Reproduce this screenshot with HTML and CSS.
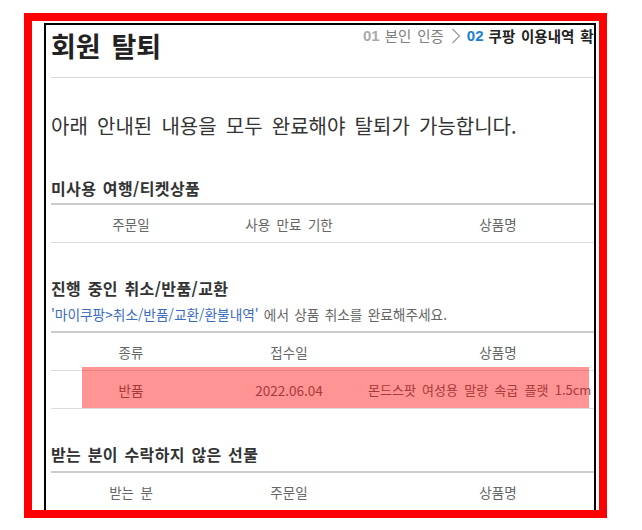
FILE: index.html
```html
<!DOCTYPE html>
<html lang="ko">
<head>
<meta charset="utf-8">
<title>회원 탈퇴</title>
<link rel="stylesheet" href="styles.css">
</head>
<body>
<div class="frame">
  <div class="panel">
    <div class="inner">
      <div class="top">
        <h1 class="title">회원 탈퇴</h1>
        <div class="steps">
          <span class="num off">01</span> <span class="step off">본인 인증</span>
          <svg class="chev" width="10" height="16" viewBox="0 0 10 16"><polyline points="1.5,1 8.5,8 1.5,15" fill="none" stroke="#9a9a9a" stroke-width="1.2"/></svg>
          <span class="num on">02</span> <span class="step on">쿠팡 이용내역 확</span>
        </div>
      </div>

      <p class="lead">아래 안내된 내용을 모두 완료해야 탈퇴가 가능합니다.</p>

      <section class="sec first">
        <h2 class="sec-title">미사용 여행/티켓상품</h2>
        <div class="row head">
          <span class="c1">주문일</span><span class="c2">사용 만료 기한</span><span class="c3">상품명</span>
        </div>
      </section>

      <section class="sec">
        <div class="sec-head">
          <h2 class="sec-title plain">진행 중인 취소/반품/교환</h2>
          <p class="note"><span class="link">'마이쿠팡&gt;취소/반품/교환/환불내역'</span> 에서 상품 취소를 완료해주세요.</p>
        </div>
        <div class="row head">
          <span class="c1">종류</span><span class="c2">접수일</span><span class="c3">상품명</span>
        </div>
        <div class="row">
          <span class="c1">반품</span><span class="c2">2022.06.04</span><span class="c3 name">몬드스팟 여성용 말랑 속굽 플랫 1.5cm</span>
        </div>
      </section>

      <section class="sec">
        <h2 class="sec-title third">받는 분이 수락하지 않은 선물</h2>
        <div class="row head">
          <span class="c1">받는 분</span><span class="c2">주문일</span><span class="c3">상품명</span>
        </div>
      </section>
    </div>
    <div class="mark"></div>
  </div>
</div>
</body>
</html>
```

FILE: styles.css
```css
* { box-sizing: border-box; }

html, body {
  margin: 0;
  padding: 0;
  background: #ffffff;
}

body {
  font-family: "Noto Sans CJK KR", "Noto Sans", sans-serif;
  color: #333333;
}

.frame {
  margin: 13px 0 0 24px;
  width: 583px;
  height: 505px;
  border: 8px solid #ff0000;
  padding: 2px 3px 0 12px;
  overflow: hidden;
  background: #ffffff;
}

.panel {
  position: relative;
  width: 552px;
  height: 520px;
  border: 2px solid #000000;
  overflow: hidden;
}

.inner {
  padding-left: 5px;
}

.top {
  display: grid;
  grid-template-columns: 312px 1fr;
  align-items: start;
  height: 53px;
  border-bottom: 1px solid #d9d9d9;
}

.title {
  margin: 3px 0 0 0;
  font-size: 27px;
  line-height: 36px;
  font-weight: 700;
  color: #222222;
  word-spacing: 0.12em;
  white-space: nowrap;
}

.steps {
  margin-top: 1px;
  white-space: nowrap;
  font-size: 14.5px;
  line-height: 20px;
  display: flex;
  align-items: center;
}

.num {
  font-family: "Liberation Sans", sans-serif;
  font-weight: 700;
  font-size: 15px;
  margin-right: 5px;
}

.num.off { color: #aaaaaa; }
.num.on { color: #1b7ed6; }

.step { word-spacing: 0.12em; }
.step.off { color: #808080; }
.step.on { color: #222222; font-weight: 700; }

.chev {
  margin: 0 6px 0 7px;
  flex: none;
}

.lead {
  margin: 33px 0 0 0;
  font-size: 20px;
  line-height: 30px;
  color: #333333;
  word-spacing: 0.18em;
  white-space: nowrap;
}

.sec {
  margin-top: 34px;
}

.sec.first {
  margin-top: 36px;
}

.sec-title {
  margin: 0;
  font-size: 16px;
  line-height: 22px;
  font-weight: 700;
  color: #333333;
  letter-spacing: 0.4px;
  word-spacing: 0.1em;
  padding-bottom: 4px;
  border-bottom: 2px solid #cccccc;
  white-space: nowrap;
}

.sec-title.third {
  padding-bottom: 6px;
}

.sec-head {
  padding-bottom: 8px;
  border-bottom: 2px solid #cccccc;
}

.sec-title.plain {
  padding-bottom: 0;
  border-bottom: 0;
}

.note {
  margin: 6px 0 0 0;
  font-size: 13.7px;
  line-height: 18px;
  color: #666666;
  word-spacing: 0.1em;
  white-space: nowrap;
}

.link { color: #3a6cc0; }

.row {
  display: grid;
  grid-template-columns: 160px 156px 262px;
  align-items: center;
  height: 38px;
  border-bottom: 1px solid #dddddd;
  font-size: 13.5px;
  color: #666666;
  word-spacing: 0.2em;
  white-space: nowrap;
}

.row span { text-align: center; }

.row .name {
  text-align: left;
  padding-left: 1px;
  font-size: 13px;
  word-spacing: 0.2em;
}

.mark {
  position: absolute;
  left: 36px;
  top: 342px;
  width: 507px;
  height: 41px;
  background: rgba(255, 0, 0, 0.42);
}
```
